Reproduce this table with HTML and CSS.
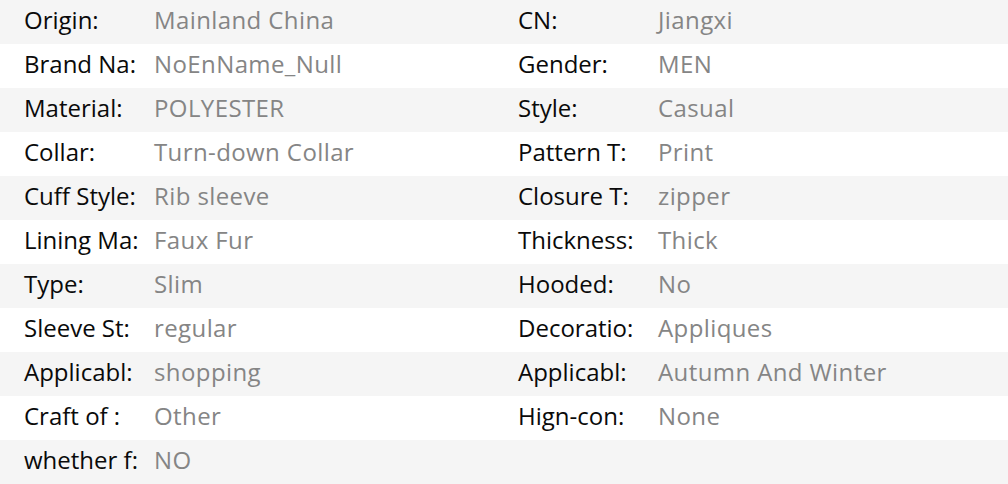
FILE: index.html
```html
<!DOCTYPE html>
<html>
<head>
<meta charset="utf-8">
<link rel="stylesheet" href="styles.css">
</head>
<body>
<div class="specs">
  <div class="row"><span class="k">Origin:</span><span class="v">Mainland China</span><span class="k">CN:</span><span class="v">Jiangxi</span></div>
  <div class="row"><span class="k">Brand Na:</span><span class="v">NoEnName_Null</span><span class="k">Gender:</span><span class="v">MEN</span></div>
  <div class="row"><span class="k">Material:</span><span class="v">POLYESTER</span><span class="k">Style:</span><span class="v">Casual</span></div>
  <div class="row"><span class="k">Collar:</span><span class="v">Turn-down Collar</span><span class="k">Pattern T:</span><span class="v">Print</span></div>
  <div class="row"><span class="k">Cuff Style:</span><span class="v">Rib sleeve</span><span class="k">Closure T:</span><span class="v">zipper</span></div>
  <div class="row"><span class="k">Lining Ma:</span><span class="v">Faux Fur</span><span class="k">Thickness:</span><span class="v">Thick</span></div>
  <div class="row"><span class="k">Type:</span><span class="v">Slim</span><span class="k">Hooded:</span><span class="v">No</span></div>
  <div class="row"><span class="k">Sleeve St:</span><span class="v">regular</span><span class="k">Decoratio:</span><span class="v">Appliques</span></div>
  <div class="row"><span class="k">Applicabl:</span><span class="v">shopping</span><span class="k">Applicabl:</span><span class="v">Autumn And Winter</span></div>
  <div class="row"><span class="k">Craft of :</span><span class="v">Other</span><span class="k">Hign-con:</span><span class="v">None</span></div>
  <div class="row"><span class="k">whether f:</span><span class="v">NO</span><span class="k"></span><span class="v"></span></div>
</div>
</body>
</html>
```
FILE: styles.css
```css
html, body {
  margin: 0;
  padding: 0;
  background: #ffffff;
}
.specs {
  width: 1008px;
  font-family: "Open Sans", "Noto Sans", sans-serif;
  font-size: 24px;
  line-height: 32px;
}
.row {
  display: grid;
  grid-template-columns: 130px 364px 140px 1fr;
  height: 44px;
  box-sizing: border-box;
  align-items: center;
  padding: 0 0 5px 24px;
  white-space: nowrap;
}
.row:nth-child(odd) {
  background: #f5f5f5;
}
.k {
  color: #0a0a0a;
}
.v {
  color: #858585;
  letter-spacing: 0.4px;
}
```
